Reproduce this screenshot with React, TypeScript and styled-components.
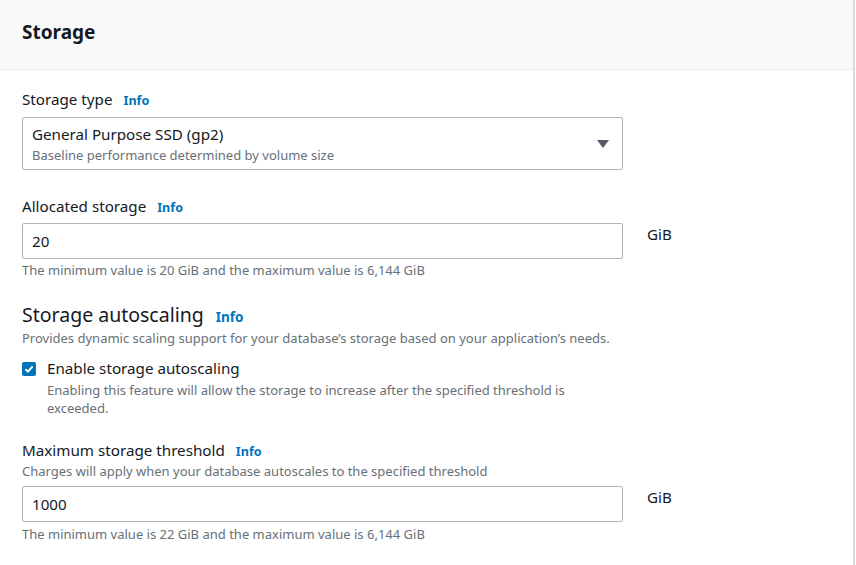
import React from "react";
import styled, { createGlobalStyle } from "styled-components";

const Global = createGlobalStyle`
  html, body { margin: 0; padding: 0; background: #ffffff; }
  body { font-family: "Noto Sans", "Open Sans", sans-serif; color: #16191f; }
  * { box-sizing: border-box; }
`;

const Panel = styled.section`
  width: 855px;
  height: 565px;
  border-right: 2px solid #d5dbdb;
  background: #ffffff;
  overflow: hidden;
`;

const Header = styled.header`
  height: 70px;
  background: #fafafa;
  border-bottom: 1px solid #eaeded;
  padding: 19px 22px 0;
`;

const Title = styled.h2`
  margin: 0;
  font-size: 19px;
  line-height: 26px;
  font-weight: 700;
  color: #16191f;
`;

const Body = styled.div`
  padding: 18px 22px 0;
  display: flex;
  flex-direction: column;
`;

const Field = styled.div<{ $gap?: number }>`
  display: flex;
  flex-direction: column;
  margin-bottom: ${(p) => p.$gap ?? 0}px;
`;

const Label = styled.div<{ $mb?: number }>`
  font-size: 15.2px;
  line-height: 22px;
  height: 22px;
  color: #16191f;
  margin-bottom: ${(p) => p.$mb ?? 6}px;
`;

const Info = styled.span<{ $size?: number; $ml?: number }>`
  margin-left: ${(p) => p.$ml ?? 11}px;
  font-size: ${(p) => p.$size ?? 12.6}px;
  line-height: 1;
  font-weight: 700;
  color: #0073bb;
`;

const Row = styled.div`
  display: flex;
  align-items: flex-start;
  gap: 24px;
`;

const SelectBox = styled.div`
  width: 601px;
  height: 53px;
  border: 1px solid #aab7b8;
  border-radius: 2px;
  padding: 0 13px 0 9px;
  display: flex;
  justify-content: space-between;
`;

const SelectText = styled.div`
  display: flex;
  flex-direction: column;
  padding-top: 5px;
`;

const Primary = styled.div`
  font-size: 15.2px;
  line-height: 22px;
  color: #16191f;
`;

const Secondary = styled.div`
  font-size: 13px;
  line-height: 20px;
  color: #687078;
`;

const Caret = styled.svg`
  width: 12px;
  height: 8px;
  align-self: center;
`;

const Input = styled.div`
  width: 601px;
  height: 36px;
  border: 1px solid #aab7b8;
  border-radius: 2px;
  padding: 0 9px;
  display: flex;
  align-items: center;
  font-size: 15.2px;
  color: #16191f;
`;

const Unit = styled.div`
  font-size: 15.2px;
  line-height: 22px;
  color: #16191f;
`;

const Hint = styled.div<{ $mt?: number }>`
  font-size: 13px;
  line-height: 18px;
  color: #687078;
  margin-top: ${(p) => p.$mt ?? 2}px;
`;

const SubHeading = styled.div`
  font-size: 19.5px;
  line-height: 26px;
  height: 26px;
  color: #16191f;
`;

const CheckRow = styled.div`
  display: flex;
  gap: 11px;
  margin-top: 10px;
`;

const CheckBox = styled.div`
  width: 14px;
  height: 14px;
  margin-top: 5px;
  border-radius: 2px;
  background: #0073bb;
  display: flex;
  align-items: center;
  justify-content: center;
  flex-shrink: 0;
`;

const CheckText = styled.div`
  display: flex;
  flex-direction: column;
  width: 560px;
`;

const Desc = styled.div<{ $mb?: number; $mt?: number }>`
  font-size: 13px;
  line-height: 18px;
  color: #687078;
  margin-top: ${(p) => p.$mt ?? 0}px;
  margin-bottom: ${(p) => p.$mb ?? 0}px;
`;

export default function App() {
  return (
    <>
      <Global />
      <Panel>
        <Header>
          <Title>Storage</Title>
        </Header>
        <Body>
          <Field $gap={25}>
            <Label $mb={7}>
              Storage type<Info>Info</Info>
            </Label>
            <SelectBox>
              <SelectText>
                <Primary>General Purpose SSD (gp2)</Primary>
                <Secondary>Baseline performance determined by volume size</Secondary>
              </SelectText>
              <Caret viewBox="0 0 12 8">
                <path d="M0 0 H12 L6 8 Z" fill="#545b64" />
              </Caret>
            </SelectBox>
          </Field>

          <Field $gap={23}>
            <Label>
              Allocated storage<Info>Info</Info>
            </Label>
            <Row>
              <Input>20</Input>
              <Unit>GiB</Unit>
            </Row>
            <Hint>The minimum value is 20 GiB and the maximum value is 6,144 GiB</Hint>
          </Field>

          <Field $gap={22}>
            <SubHeading>
              Storage autoscaling<Info $size={13.5} $ml={12}>Info</Info>
            </SubHeading>
            <Desc $mt={1}>
              Provides dynamic scaling support for your database’s storage based on your application’s needs.
            </Desc>
            <CheckRow>
              <CheckBox>
                <svg width="10" height="10" viewBox="0 0 10 10">
                  <path d="M1.5 5.2 L4 7.6 L8.6 2.4" stroke="#fff" strokeWidth="2" fill="none" />
                </svg>
              </CheckBox>
              <CheckText>
                <Primary>Enable storage autoscaling</Primary>
                <Desc $mt={2}>
                  Enabling this feature will allow the storage to increase after the specified threshold is exceeded.
                </Desc>
              </CheckText>
            </CheckRow>
          </Field>

          <Field>
            <Label $mb={1}>
              Maximum storage threshold<Info>Info</Info>
            </Label>
            <Desc $mb={6}>
              Charges will apply when your database autoscales to the specified threshold
            </Desc>
            <Row>
              <Input>1000</Input>
              <Unit>GiB</Unit>
            </Row>
            <Hint $mt={3}>The minimum value is 22 GiB and the maximum value is 6,144 GiB</Hint>
          </Field>
        </Body>
      </Panel>
    </>
  );
}
